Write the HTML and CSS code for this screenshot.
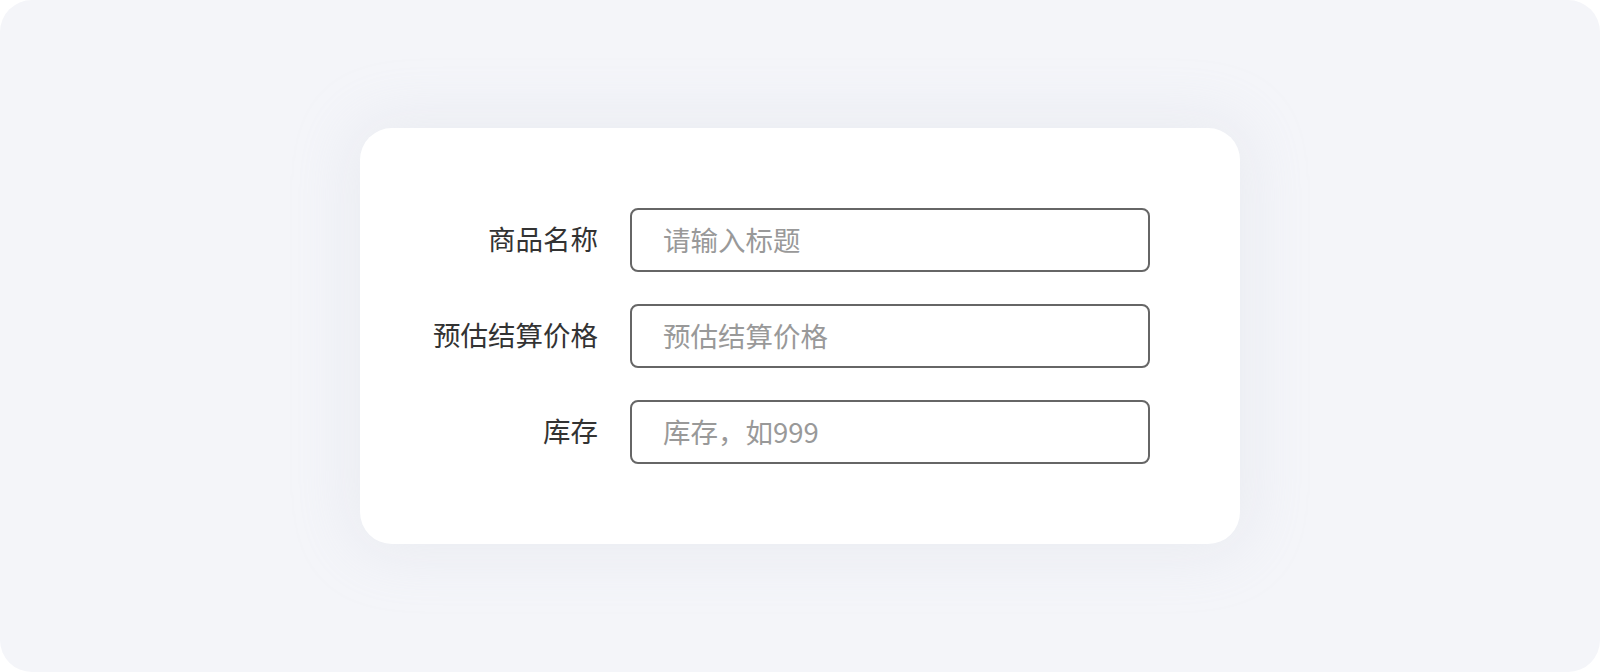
FILE: index.html
```html
<!DOCTYPE html>
<html lang="zh">
<head>
<meta charset="utf-8">
<link rel="stylesheet" href="styles.css">
<title>表单</title>
</head>
<body>
<div class="stage">
  <form class="card">
    <label class="label" for="f1">商品名称</label>
    <input class="field" id="f1" type="text" placeholder="请输入标题">
    <label class="label" for="f2">预估结算价格</label>
    <input class="field" id="f2" type="text" placeholder="预估结算价格">
    <label class="label" for="f3">库存</label>
    <input class="field" id="f3" type="text" placeholder="库存，如999">
  </form>
</div>
</body>
</html>
```

FILE: styles.css
```css
html, body {
  margin: 0;
  padding: 0;
  background: #ffffff;
}
body {
  width: 1600px;
  height: 672px;
  overflow: hidden;
  font-family: "Noto Sans CJK SC", "Noto Sans", sans-serif;
}
.stage {
  width: 1600px;
  height: 672px;
  background: #f4f5f9;
  border-radius: 32px;
  display: flex;
  align-items: center;
  justify-content: center;
}
.card {
  box-sizing: border-box;
  width: 880px;
  height: 416px;
  background: #ffffff;
  border-radius: 32px;
  box-shadow: 0 0 60px 10px rgba(200, 204, 220, 0.22);
  padding: 80px 90px 80px 0;
  display: grid;
  grid-template-columns: 238px 520px;
  column-gap: 32px;
  row-gap: 32px;
  grid-auto-rows: 64px;
  align-items: center;
}
.label {
  justify-self: end;
  font-size: 27.5px;
  line-height: 1.3;
  padding-bottom: 2px;
  color: #333333;
  white-space: nowrap;
}
.field {
  box-sizing: border-box;
  width: 520px;
  height: 64px;
  border: 2px solid #666666;
  border-radius: 8px;
  padding: 0 31px 2px;
  font-family: "Noto Sans CJK SC", "Noto Sans", sans-serif;
  font-size: 27.5px;
  color: #333333;
  background: #ffffff;
  outline: none;
}
.field::placeholder {
  color: #999999;
}
```
